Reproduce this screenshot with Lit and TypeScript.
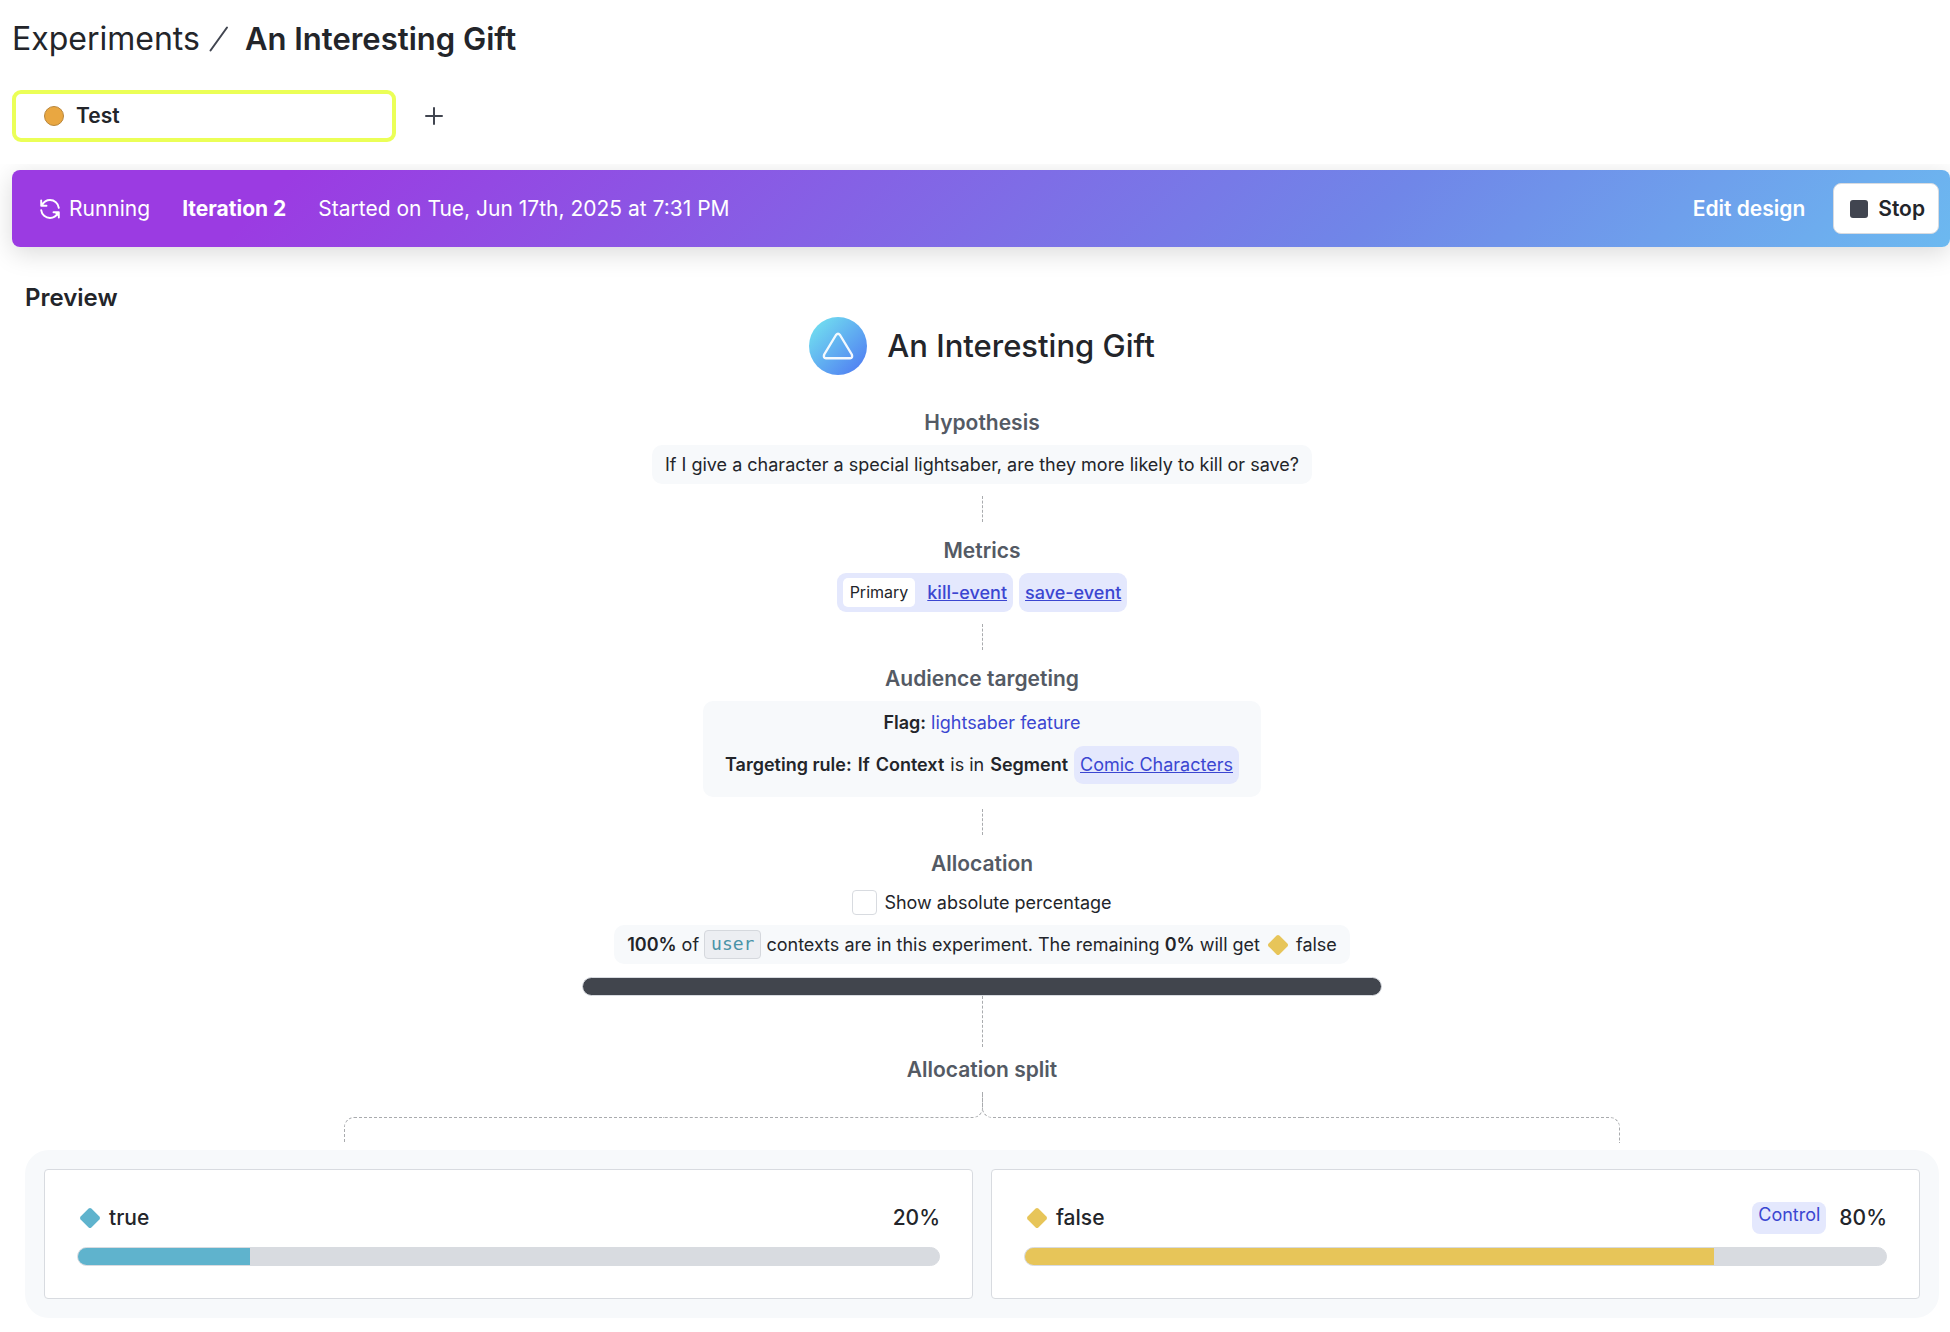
import { LitElement, html, css, svg } from "lit";
import { customElement, property } from "lit/decorators.js";

const diamond = svg`<path d="M9.6 1.6 Q11 .3 12.4 1.6 L20.4 9.6 Q21.7 11 20.4 12.4 L12.4 20.4 Q11 21.7 9.6 20.4 L1.6 12.4 Q.3 11 1.6 9.6 Z" fill="currentColor"/>`;

@customElement("variation-card")
class VariationCard extends LitElement {
  @property() name = "";
  @property({ type: Number }) percent = 0;
  @property() tone = "blue";
  @property({ type: Boolean }) control = false;

  static styles = css`
    :host { display: block; border: 1px solid #d8dbe0; border-radius: 4px; background: #fff; padding: 32px; }
    .row { display: flex; align-items: center; height: 32px; margin-bottom: 13px; font-size: 21px; font-weight: 500; color: #23252a; }
    .name { margin-left: 8px; }
    .value { margin-left: 13px; }
    .spacer { flex: 1; }
    .badge { height: 32px; box-sizing: border-box; padding: 0 6px; border-radius: 8px; background: #e4e8fd; color: #3b46d1; font-size: 18px; font-weight: 400; line-height: 26px; }
    .track { height: 17px; border: 1px solid #d8dbe0; border-radius: 10px; background: #d8dbe0; overflow: hidden; }
    .fill { height: 100%; background: currentColor; }
    .blue { color: #5fb3cd; }
    .gold { color: #e7c559; }
    svg { display: block; margin-left: 2px; }
  `;

  render() {
    return html`
      <div class="row">
        <svg class=${this.tone} width="22" height="22" viewBox="0 0 22 22" aria-hidden="true">${diamond}</svg>
        <span class="name">${this.name}</span>
        <span class="spacer"></span>
        ${this.control ? html`<span class="badge">Control</span>` : null}
        <span class="value">${this.percent}%</span>
      </div>
      <div class="track" role="progressbar" aria-label=${this.name} aria-valuenow=${this.percent}>
        <div class="fill ${this.tone}" style="width:${this.percent}%"></div>
      </div>`;
  }
}

@customElement("app-root")
class AppRoot extends LitElement {
  static styles = css`
    :host { display: block; background: #fff; color: #23252a; font-family: Inter, "Liberation Sans", sans-serif; font-size: 18px; line-height: 24px; }
    h1, h2, h3, p { margin: 0; }
    a { color: #3b46d1; }
    button { font: inherit; cursor: pointer; }
    header { position: relative; z-index: 1; background: #fff; padding: 19px 12px 22px; }
    h1 { display: flex; align-items: center; font-size: 31px; line-height: 40px; font-weight: 600; }
    .crumb { color: inherit; text-decoration: none; font-size: 32px; font-weight: 400; }
    .slash { margin: 0 16px 0 9px; }
    .tabs { display: flex; align-items: center; gap: 18px; margin-top: 31px; }
    .tab { display: flex; align-items: center; gap: 12px; box-sizing: border-box; width: 384px; height: 52px; padding: 0 28px; border: 4px solid #ebff57; border-radius: 9px; background: #fff; color: inherit; font-size: 21px; font-weight: 600; }
    .dot { box-sizing: border-box; width: 20px; height: 20px; border: 1px solid #b8863c; border-radius: 50%; background: #e9a741; }
    .add { display: flex; align-items: center; justify-content: center; width: 40px; height: 40px; padding: 0; border: 0; background: none; }
    .banner { display: flex; align-items: center; margin: 6px 0 0 12px; padding: 13px 11px 13px 28px; border-radius: 8px; color: #fff; font-size: 21px; background: linear-gradient(135deg, #9b3be2 14%, #7086e8 70%, #6cb9f0 100%); box-shadow: 0 6px 26px rgba(0, 0, 0, 0.15); }
    .status { display: flex; align-items: center; gap: 9px; }
    .iteration { margin: 0 32px; font-weight: 700; }
    .spacer { flex: 1; }
    .edit { margin-right: 28px; padding: 0; border: 0; background: none; color: #fff; font-weight: 600; }
    .stop { display: flex; align-items: center; gap: 10px; box-sizing: border-box; height: 51px; padding: 0 13px 0 16px; border: 1px solid #d8dbe0; border-radius: 8px; background: #fff; color: #23252a; font-weight: 600; }
    .square { width: 18px; height: 18px; border-radius: 3px; background: #414550; }
    main { display: flex; flex-direction: column; align-items: center; margin: 35px 11px 14px 25px; }
    .preview { align-self: flex-start; font-size: 24px; line-height: 32px; font-weight: 600; }
    .title { display: flex; align-items: center; gap: 20px; margin: 3px 0 34px; font-size: 31px; line-height: 40px; font-weight: 500; }
    .title svg { display: block; }
    h3 { font-size: 21px; line-height: 28px; font-weight: 600; color: #545a64; margin-bottom: 8px; }
    .box { box-sizing: border-box; border-radius: 10px; background: #f7f9fb; }
    .line { display: flex; align-items: center; min-height: 39px; padding: 0 13px; }
    .joint { height: 26px; margin: 12px 0 15px; border-left: 1px dashed #a9abae; }
    .pills { display: flex; gap: 6px; }
    .pill { display: flex; align-items: center; box-sizing: border-box; height: 39px; padding: 0 6px; border-radius: 9px; background: #e4e8fd; font-weight: 500; }
    .light { height: 38px; font-weight: 400; }
    .primary { margin-right: 12px; padding: 0 7px; border-radius: 5px; background: #fff; font-size: 16px; line-height: 29px; font-weight: 400; }
    .audience { display: flex; flex-direction: column; align-items: center; gap: 11px; padding: 10px 22px 13px; }
    .rule { display: flex; align-items: center; gap: 6px; }
    .flag a { text-decoration: none; }
    b { font-weight: 600; }
    .check { display: flex; align-items: center; gap: 7px; margin: 4px 0 10px; height: 25px; }
    .check input { appearance: none; box-sizing: border-box; width: 25px; height: 25px; margin: 0; border: 1px solid #d8dbe0; border-radius: 4px; background: #fff; }
    .traffic { gap: 5px; }
    code { box-sizing: border-box; height: 29px; padding: 0 6px; border: 1px solid #d5d8dd; border-radius: 4px; background: #eceef2; color: #4993a7; font-family: "DejaVu Sans Mono", monospace; font-size: 18px; line-height: 26px; }
    .gold { color: #e7c559; margin: 0 2px; }
    .total { box-sizing: border-box; width: 41.8%; height: 19px; margin-top: 13px; border: 1px solid #d8dbe0; border-radius: 10px; background: #41454d; }
    .stem { height: 51px; margin-bottom: 9px; border-left: 1px dashed #a9abae; }
    .branches { display: flex; align-self: stretch; height: 51px; margin: 0 16.667% 7px; }
    .branch { box-sizing: border-box; flex: 1; height: 26px; border: 0 dashed #a9abae; }
    .far-left { align-self: flex-end; border-width: 1px 0 0 1px; border-radius: 10px 0 0 0; }
    .near-left { border-width: 0 1px 1px 0; border-radius: 0 0 10px 0; }
    .near-right { margin-left: -1px; border-width: 0 0 1px 1px; border-radius: 0 0 0 10px; }
    .far-right { align-self: flex-end; border-width: 1px 1px 0 0; border-radius: 0 10px 0 0; }
    .split { display: grid; grid-template-columns: 1fr 1fr; gap: 18px; align-self: stretch; padding: 19px; border-radius: 24px; background: #f7f9fb; }
  `;

  render() {
    return html`
      <header>
        <h1>
          <a class="crumb" href="#experiments">Experiments</a>
          <svg class="slash" width="20" height="26" viewBox="0 0 20 26" aria-hidden="true"><path d="M1.5 24.5 18 1.5" stroke="#414550" stroke-width="2" stroke-linecap="round"/></svg>
          <span>An Interesting Gift</span>
        </h1>
        <div class="tabs">
          <button class="tab"><span class="dot"></span>Test</button>
          <button class="add" aria-label="Add environment">
            <svg width="20" height="20" viewBox="0 0 20 20"><path d="M10 2v16M2 10h16" stroke="#414550" stroke-width="2" stroke-linecap="round"/></svg>
          </button>
        </div>
      </header>
      <section class="banner">
        <span class="status">
          <svg width="20" height="20" viewBox="0 0 20 20" fill="none" stroke="#fff" stroke-width="1.9" stroke-linecap="round" stroke-linejoin="round" aria-hidden="true">
            <path d="M1.200 1.500V6.800H6.500M1.800 6.200C3.800 2.600 6.800 1 10 1 14.400 1 18.300 4.200 18.800 8.800"/>
            <path d="M18.800 18.500V13.200H13.500M18.200 13.800C16.200 17.400 13.200 19 10 19 5.600 19 1.700 15.800 1.200 11.200"/>
            <path d="M18.800 13.200V18L14.500 13.500Z" fill="#fff" stroke="none"/>
          </svg>
          Running
        </span>
        <span class="iteration">Iteration 2</span>
        <span>Started on Tue, Jun 17th, 2025 at 7:31 PM</span>
        <span class="spacer"></span>
        <button class="edit">Edit design</button>
        <button class="stop"><span class="square"></span>Stop</button>
      </section>
      <main>
        <h2 class="preview">Preview</h2>
        <div class="title">
          <svg width="58" height="58" viewBox="0 0 58 58" aria-hidden="true">
            <defs><linearGradient id="sky" x1="0.15" y1="0.15" x2="0.85" y2="0.85"><stop offset="0" stop-color="#6fd8f0"/><stop offset="1" stop-color="#5386f2"/></linearGradient></defs>
            <circle cx="29" cy="29" r="29" fill="url(#sky)"/>
            <path d="M27 18Q29 15.500 31 18L42.800 37.500Q44 41 41 41.200H17Q14 41 15.200 37.500Z" fill="none" stroke="#fff" stroke-opacity=".92" stroke-width="2.400" stroke-linejoin="round"/>
          </svg>
          <span>An Interesting Gift</span>
        </div>

        <h3>Hypothesis</h3>
        <p class="box line">If I give a character a special lightsaber, are they more likely to kill or save?</p>
        <div class="joint"></div>

        <h3>Metrics</h3>
        <div class="pills">
          <span class="pill"><span class="primary">Primary</span><a href="#kill-event">kill-event</a></span>
          <span class="pill"><a href="#save-event">save-event</a></span>
        </div>
        <div class="joint"></div>

        <h3>Audience targeting</h3>
        <div class="box audience">
          <span class="flag"><b>Flag:</b> <a href="#flag">lightsaber feature</a></span>
          <div class="rule"><b>Targeting rule:</b><b>If</b><b>Context</b><span>is in</span><b>Segment</b><span class="pill light"><a href="#segment">Comic Characters</a></span></div>
        </div>
        <div class="joint"></div>

        <h3>Allocation</h3>
        <label class="check"><input type="checkbox" />Show absolute percentage</label>
        <div class="box line traffic">
          <b>100%</b><span>of</span><code>user</code><span>contexts are in this experiment. The remaining <b>0%</b> will get</span>
          <svg class="gold" width="22" height="22" viewBox="0 0 22 22" aria-hidden="true">${diamond}</svg>
          <span>false</span>
        </div>
        <div class="total"></div>
        <div class="stem"></div>

        <h3>Allocation split</h3>
        <div class="branches">
          <div class="branch far-left"></div>
          <div class="branch near-left"></div>
          <div class="branch near-right"></div>
          <div class="branch far-right"></div>
        </div>
        <div class="split">
          <variation-card name="true" percent="20" tone="blue"></variation-card>
          <variation-card name="false" percent="80" tone="gold" control></variation-card>
        </div>
      </main>`;
  }
}
